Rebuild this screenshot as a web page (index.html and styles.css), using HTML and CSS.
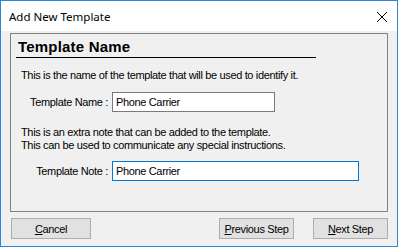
FILE: index.html
```html
<!DOCTYPE html>
<html>
<head>
<meta charset="utf-8">
<link rel="stylesheet" href="styles.css">
</head>
<body>
<div class="window">
  <div class="titlebar">
    <span class="title">Add New Template</span>
    <svg class="close" width="12" height="12" viewBox="0 0 12 12"><path d="M1 1 L11 11 M11 1 L1 11" stroke="#000" stroke-width="1" fill="none"/></svg>
  </div>
  <div class="client">
    <div class="panel">
      <div class="heading">Template Name</div>
      <p class="para p1">This is the name of the template that will be used to identify it.</p>
      <div class="row r1">
        <span class="label">Template Name :</span>
        <div class="input i1">Phone Carrier</div>
      </div>
      <p class="para p2">This is an extra note that can be added to the template.<br>This can be used to communicate any special instructions.</p>
      <div class="row r2">
        <span class="label">Template Note :</span>
        <div class="input i2 focused">Phone Carrier</div>
      </div>
    </div>
    <div class="footer">
      <div class="btn cancel"><u>C</u>ancel</div>
      <div class="spacer"></div>
      <div class="btn"><u>P</u>revious Step</div>
      <div class="btn"><u>N</u>ext Step</div>
    </div>
  </div>
</div>
</body>
</html>
```
FILE: styles.css
```css
* { box-sizing: border-box; }
html, body { margin: 0; padding: 0; background: #f0f0f0; }
.window {
  width: 398px;
  height: 247px;
  border: 1px solid #2b86d6;
  background: #f0f0f0;
  display: flex;
  flex-direction: column;
  font-family: "Liberation Sans", Arial, sans-serif;
  font-size: 11px;
  letter-spacing: -0.35px;
  color: #000;
}
.titlebar {
  height: 30px;
  background: #fff;
  display: flex;
  align-items: center;
  padding-left: 8px;
  padding-right: 9px;
}
.title {
  font-family: "Noto Sans", "Open Sans", sans-serif;
  font-size: 11.5px;
  letter-spacing: 0;
  flex: 1;
  margin-top: 1px;
}
.close { display: block; margin-top: 1px; }
.client {
  flex: 1;
  display: flex;
  flex-direction: column;
  padding: 2px 9px 0 9px;
}
.panel {
  width: 378px;
  height: 179px;
  border: 1px solid #828282;
  padding: 5px 0 0 4px;
}
.heading {
  width: 300px;
  font-weight: bold;
  font-size: 15px;
  letter-spacing: 0.2px;
  line-height: 16px;
  padding: 0 0 2px 2px;
  margin-left: 1px;
  border-bottom: 1px solid #000;
}
.para {
  margin: 11px 0 0 6px;
  line-height: 13px;
}
.row {
  display: grid;
  grid-template-columns: 93px auto;
  column-gap: 4px;
  align-items: center;
}
.label { text-align: right; }
.r1 { margin-top: 10px; }
.r2 { margin-top: 9px; }
.p2 { margin-top: 14px; }
.input {
  height: 20px;
  border: 1px solid #7a7a7a;
  background: #fff;
  padding: 0 3px;
  line-height: 18px;
  font-size: 11px;
}
.i1 { width: 163px; }
.i2 { width: 247px; }
.focused { border-color: #0078d7; }
.footer {
  display: flex;
  margin-top: 6px;
  padding-left: 1px;
  gap: 19px;
}
.spacer { flex: 1; margin-right: -19px; }
.btn {
  width: 75px;
  height: 21px;
  background: #e1e1e1;
  border: 1px solid #adadad;
  display: flex;
  align-items: center;
  justify-content: center;
  font-size: 11px;
}
.cancel { width: 80px; }
```
